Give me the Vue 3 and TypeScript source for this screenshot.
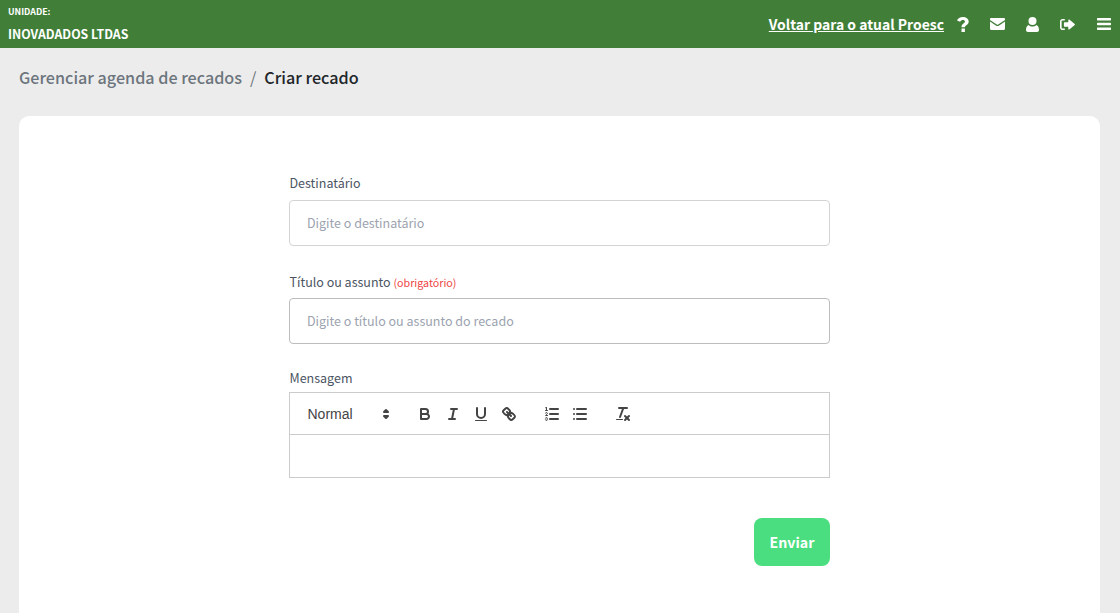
<script setup lang="ts">
const font = 'x'
void font
</script>

<template>
  <div class="page">
    <header class="topbar">
      <div class="unit">
        <span class="unit-label">UNIDADE:</span>
        <span class="unit-name">INOVADADOS LTDAS</span>
      </div>
      <nav class="actions">
        <a class="back" href="#">Voltar para o atual Proesc</a>
        <svg class="ico q" viewBox="0 0 12 15" width="12" height="15"><path d="M0 3.6C1 1.3 3 0 5.800 0 9 0 11.700 1.900 11.700 4.600c0 1.800-1 2.800-2.300 3.700-1 .7-1.500 1.100-1.500 2H4.500c0-2 .7-3 2-3.900C7.500 5.700 8 5.300 8 4.600 8 3.700 7 3.100 5.900 3.100c-1.200 0-2 .6-2.800 1.700L0 3.600ZM4.500 11.500h3.400V15H4.500v-3.500Z" fill="#fff"/></svg>
        <svg class="ico env" viewBox="0 0 15 12" width="15" height="12"><path d="M1.200 0h12.600C14.500 0 15 .5 15 1.200v.8L8.200 6.500c-.4.300-1 .3-1.400 0L0 2v-.8C0 .5.500 0 1.200 0Z" fill="#fff"/><path d="M0 3.600 6.200 7.700c.8.500 1.800.5 2.600 0L15 3.600v7.200c0 .7-.5 1.200-1.200 1.200H1.200C.5 12 0 11.500 0 10.800V3.600Z" fill="#fff"/></svg>
        <svg class="ico usr" viewBox="0 0 13 15" width="13" height="15"><circle cx="6.500" cy="4" r="4" fill="#fff"/><path d="M2.600 8C3.700 9 5 9.500 6.500 9.500S9.300 9 10.400 8C12 8.600 13 10.500 13 12.800c0 1.400-.8 2.200-2 2.200H2C.8 15 0 14.200 0 12.800 0 10.500 1 8.600 2.600 8Z" fill="#fff"/></svg>
        <svg class="ico out" viewBox="0 0 15 11" width="15" height="11"><path d="M4.800 0v1.600H2.600c-.6 0-1 .4-1 1v5.800c0 .6.400 1 1 1h2.200V11H2.600C1.200 11 0 9.800 0 8.400V2.600C0 1.200 1.200 0 2.600 0h2.200Z" fill="#fff"/><path d="M9.300.6 14.700 5c.3.300.3.700 0 1l-5.400 4.400c-.4.300-1 .1-1-.5V7.700H4.500c-.3 0-.6-.3-.6-.6V3.900c0-.3.300-.6.600-.6h3.800V1.100c0-.6.600-.8 1-.5Z" fill="#fff"/></svg>
        <svg class="ico bars" viewBox="0 0 14 12" width="14" height="12"><path d="M.5 0h13c.3 0 .5.200.5.500v1.500c0 .3-.2.500-.5.500H.5C.2 2.500 0 2.300 0 2V.5C0 .2.200 0 .5 0ZM.5 4.750h13c.3 0 .5.200.5.500v1.500c0 .3-.2.500-.5.500H.5c-.3 0-.5-.2-.5-.5v-1.500c0-.3.200-.5.500-.5ZM.5 9.500h13c.3 0 .5.200.5.500v1.500c0 .3-.2.500-.5.500H.5c-.3 0-.5-.2-.5-.5V10c0-.3.200-.5.500-.5Z" fill="#fff"/></svg>
      </nav>
    </header>

    <main class="content">
      <div class="crumbs">
        <span class="crumb-parent">Gerenciar agenda de recados</span>
        <span class="crumb-sep">/</span>
        <span class="crumb-current">Criar recado</span>
      </div>

      <section class="card">
        <form class="form" @submit.prevent>
          <div class="field first">
            <label class="label">Destinatário</label>
            <input class="input" type="text" placeholder="Digite o destinatário" />
          </div>
          <div class="field second">
            <label class="label">Título ou assunto <span class="req">(obrigatório)</span></label>
            <input class="input dark" type="text" placeholder="Digite o título ou assunto do recado" />
          </div>
          <div class="field third">
            <label class="label">Mensagem</label>
            <div class="editor">
              <div class="toolbar">
                <div class="picker">
                  <span>Normal</span>
                  <svg viewBox="0 0 18 18" width="18" height="18"><polygon class="st fl" points="7 11 9 13 11 11 7 11" /><polygon class="st fl" points="7 7 9 5 11 7 7 7" /></svg>
                </div>
                <div class="group">
                  <span class="btn"><svg viewBox="0 0 18 18"><path class="st" d="M5,4H9.500A2.500,2.500,0,0,1,12,6.500v0A2.500,2.500,0,0,1,9.500,9H5A0,0,0,0,1,5,9V4A0,0,0,0,1,5,4Z" /><path class="st" d="M5,9h5.500A2.500,2.500,0,0,1,13,11.500v0A2.500,2.500,0,0,1,10.500,14H5a0,0,0,0,1,0,0V9A0,0,0,0,1,5,9Z" /></svg></span>
                  <span class="btn"><svg viewBox="0 0 18 18"><line class="st" x1="7" x2="13" y1="4" y2="4" /><line class="st" x1="5" x2="11" y1="14" y2="14" /><line class="st" x1="8" x2="10" y1="14" y2="4" /></svg></span>
                  <span class="btn"><svg viewBox="0 0 18 18"><path class="st" d="M5,3V9a4.012,4.012,0,0,0,4,4H9a4.012,4.012,0,0,0,4-4V3" /><rect class="fl" height="1" rx="0.5" ry="0.5" width="12" x="3" y="15" /></svg></span>
                  <span class="btn"><svg viewBox="0 0 18 18"><line class="st" x1="7" x2="11" y1="7" y2="11" /><path class="st" d="M8.900,4.577a3.476,3.476,0,0,1,.36,4.679A3.476,3.476,0,0,1,4.577,8.900C3.185,7.500,2.231,6.754,3.680,5.300L5.300,3.680C6.754,2.231,7.500,3.185,8.900,4.577Z" /><path class="st" d="M13.423,9.100a3.476,3.476,0,0,0-4.679-.36,3.476,3.476,0,0,0,.36,4.679c1.392,1.392,2.147,2.346,3.600.9l1.620-1.620C15.769,11.246,14.815,10.500,13.423,9.100Z" /></svg></span>
                </div>
                <div class="group">
                  <span class="btn"><svg viewBox="0 0 18 18"><line class="st" x1="7" x2="15" y1="4" y2="4" /><line class="st" x1="7" x2="15" y1="9" y2="9" /><line class="st" x1="7" x2="15" y1="14" y2="14" /><line class="st thin" x1="2.500" x2="4.500" y1="5.500" y2="5.500" /><path class="fl" d="M3.500,6A0.500,0.500,0,0,1,3,5.500V3.085l-0.276.138A0.500,0.500,0,0,1,2.053,3c-0.124-.247-0.023-0.324.224-0.447l1-.5A0.500,0.500,0,0,1,4,2.500v3A0.500,0.500,0,0,1,3.500,6Z" /><path class="st thin" d="M4.500,10.500h-2c0-.234,1.850-1.076,1.850-2.234A0.959,0.959,0,0,0,2.500,8.156" /><path class="st thin" d="M2.500,14.846a0.959,0.959,0,0,0,1.850-.109A0.700,0.700,0,0,0,3.750,14a0.688,0.688,0,0,0,.6-0.736,0.959,0.959,0,0,0-1.850-.109" /></svg></span>
                  <span class="btn"><svg viewBox="0 0 18 18"><line class="st" x1="6" x2="15" y1="4" y2="4" /><line class="st" x1="6" x2="15" y1="9" y2="9" /><line class="st" x1="6" x2="15" y1="14" y2="14" /><line class="st" x1="3" x2="3" y1="4" y2="4" /><line class="st" x1="3" x2="3" y1="9" y2="9" /><line class="st" x1="3" x2="3" y1="14" y2="14" /></svg></span>
                </div>
                <div class="group">
                  <span class="btn"><svg viewBox="0 0 18 18"><line class="st" x1="5" x2="13" y1="3" y2="3" /><line class="st" x1="6" x2="9.350" y1="12" y2="3" /><line class="st" x1="11" x2="15" y1="11" y2="15" /><line class="st" x1="15" x2="11" y1="11" y2="15" /><rect class="fl" height="1" rx="0.500" ry="0.500" width="7" x="2" y="14" /></svg></span>
                </div>
              </div>
              <div class="body"></div>
            </div>
          </div>
          <div class="submit-row">
            <button class="submit" type="submit">Enviar</button>
          </div>
        </form>
      </section>
    </main>
  </div>
</template>

<style>
html, body { margin: 0; height: 100%; overflow: hidden; background: #ececec; }
</style>

<style scoped>
.page {
  height: 613px;
  overflow: hidden;
  display: flex;
  flex-direction: column;
  background: #ececec;
  font-family: "Noto Sans CJK SC", "Source Sans Pro", "Open Sans", sans-serif;
}
.topbar {
  height: 48px;
  flex: none;
  display: flex;
  justify-content: space-between;
  align-items: center;
  background: #417f38;
  color: #fff;
  padding: 0 9px 0 8px;
}
.unit { display: flex; flex-direction: column; align-self: stretch; }
.unit-label { font-size: 8.8px; font-weight: 700; line-height: 12px; margin-top: 6px; }
.unit-name { font-size: 12.3px; font-weight: 700; line-height: 20px; margin-top: 6px; }
.actions { display: flex; align-items: center; }
.back { color: #fff; font-size: 13.95px; font-weight: 700; text-decoration: underline; margin-right: 13px; }
.ico { display: block; flex: none; }
.env { margin-left: 21px; }
.usr { margin-left: 21px; }
.out { margin-left: 21px; }
.bars { margin-left: 22px; }
.content { flex: 1; padding: 0 20px 0 19px; display: flex; flex-direction: column; min-height: 0; }
.crumbs { height: 68px; flex: none; display: flex; align-items: center; padding-bottom: 10px; box-sizing: border-box; font-size: 16.15px; font-weight: 500; gap: 8px; }
.crumb-parent { color: #6c757d; }
.crumb-sep { color: #6c757d; font-weight: 400; }
.crumb-current { color: #212529; }
.card { background: #fff; border-radius: 10px 10px 0 0; flex: 1; padding-top: 58px; }
.form { width: 541px; margin: 0 auto; }
.field { display: flex; flex-direction: column; }
.label { font-size: 12.5px; line-height: 18px; color: #4b5563; margin-bottom: 8px; padding-left: 0.5px; }
.req { font-size: 10.7px; color: #ef4444; }
.input {
  height: 46px;
  box-sizing: border-box;
  border: 1px solid #d4d4d4;
  border-radius: 4px;
  padding: 0 16px 2px 17px;
  font: inherit;
  font-size: 12.5px;
  outline: none;
  background: #fff;
}
.input.dark { border-color: #bdbdbd; }
.input::placeholder { color: #9ca3af; opacity: 1; }
.second { margin-top: 27px; }
.second .label { margin-bottom: 6px; }
.third { margin-top: 25px; }
.third .label { margin-bottom: 5px; }
.editor { border: 1px solid #ccc; box-sizing: border-box; height: 86px; }
.toolbar { height: 42px; box-sizing: border-box; border-bottom: 1px solid #ccc; padding: 8px; display: flex; align-items: center; }
.picker {
  width: 98px;
  height: 24px;
  box-sizing: border-box;
  display: flex;
  align-items: center;
  justify-content: space-between;
  padding-left: 9.5px;
  padding-right: 1px;
  margin-right: 15px;
  font-family: "Liberation Sans", Arial, sans-serif;
  font-size: 14px;
  color: #444;
}
.group { display: flex; margin-right: 15px; }
.btn { width: 28px; height: 24px; box-sizing: border-box; padding: 3px 5px; display: block; }
.btn svg { display: block; width: 18px; height: 18px; }
.st { fill: none; stroke: #444; stroke-width: 2; stroke-linecap: round; stroke-linejoin: round; }
.st.thin { stroke-width: 1; }
.fl { fill: #444; }
.picker .st { stroke-width: 2; }
.body { height: 42px; }
.submit-row { display: flex; justify-content: flex-end; margin-top: 40px; }
.submit {
  width: 76px;
  height: 48px;
  border: 0;
  border-radius: 8px;
  background: #4ade80;
  color: #fff;
  font: inherit;
  font-size: 14.2px;
  font-weight: 700;
  padding: 0;
}
</style>
